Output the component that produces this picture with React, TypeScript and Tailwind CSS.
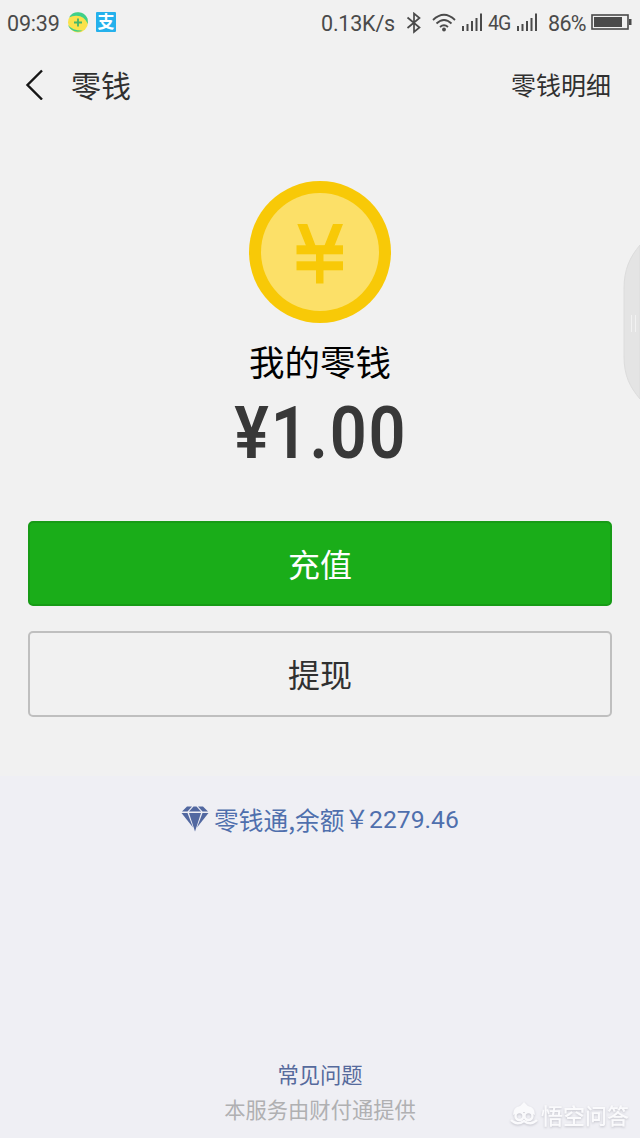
import React from 'react';

interface SignalBarsProps {
    className?: string;
}

const SignalBars = ({ className = '' }: SignalBarsProps) => (
    <svg className={className} width="21" height="19" viewBox="0 0 21 19" fill="#4a4a4a">
        <rect x="0" y="13" width="2" height="5" />
        <rect x="4.5" y="11" width="2" height="7" />
        <rect x="9" y="8" width="2" height="10" />
        <rect x="13.5" y="5" width="2" height="13" />
        <rect x="18" y="0.5" width="2" height="17.5" />
    </svg>
);

const StatusBar = () => (
    <div className="flex h-11 items-center pl-[7px] pr-2 pt-0.5 font-['Roboto',sans-serif] text-[21.5px] leading-none text-[#4a4a4a]">
        <span className="w-[53px] whitespace-nowrap pt-0.5 tracking-[-0.2px]">09:39</span>
        <svg className="ml-[7px] shrink-0" width="22" height="22" viewBox="0 0 22 22">
            <circle cx="11" cy="10.5" r="10" fill="#fbe24b" />
            <path d="M2 5.5A10.3 10.3 0 0 1 20.5 6.5L21 12Q17 3.5 9 3.8Q5 3.8 2 5.5Z" fill="#3fd08a" />
            <path d="M1 13Q5 18.5 15.5 18.5A10.3 10.3 0 0 1 1 13Z" fill="#3fd08a" />
            <path d="M11 6.5V14.5M7 10.5H15" stroke="#46b66a" strokeWidth="1.8" />
        </svg>
        <span className="ml-[7px] flex h-5 w-5 shrink-0 -translate-y-px items-center justify-center rounded-[1px] bg-[#25b1ec] font-['Noto_Sans_CJK_SC',sans-serif] text-[17px] font-bold leading-5 text-white">
            <span className="-mt-[3px]">支</span>
        </span>
        <span className="ml-auto w-[75px] whitespace-nowrap pt-0.5 tracking-[-0.2px]">0.13K/s</span>
        <svg className="ml-2.5 shrink-0" width="16" height="22" viewBox="0 0 16 22" fill="none" stroke="#4a4a4a" strokeWidth="1.7">
            <path d="M1.5 5.5L13.5 15.5L8 20V1.5L13.5 6L1.5 16" />
        </svg>
        <svg className="ml-2.5 shrink-0" width="24" height="20" viewBox="0 0 24 20" fill="none" stroke="#4a4a4a" strokeWidth="1.8">
            <path d="M1 7Q12 -3.5 23 7" />
            <path d="M4.5 10.5Q12 3.5 19.5 10.5" />
            <path d="M8 14Q12 10.5 16 14" />
            <circle cx="12" cy="16.5" r="1.9" fill="#4a4a4a" stroke="none" />
        </svg>
        <SignalBars className="ml-[6px] shrink-0 -translate-y-px" />
        <span className="ml-[5px] w-[24px] pt-0.5 text-[19.5px] tracking-[-1px]">4G</span>
        <SignalBars className="ml-[5px] shrink-0 -translate-y-px" />
        <span className="ml-2.5 w-[40px] whitespace-nowrap pt-0.5 tracking-[-0.7px]">86%</span>
        <svg className="ml-[3px] shrink-0 -translate-y-px" width="41" height="18" viewBox="0 0 41 18">
            <rect x="1" y="2" width="36" height="14" fill="none" stroke="#4a4a4a" strokeWidth="1.6" />
            <rect x="3" y="4" width="28" height="10" fill="#4a4a4a" />
            <rect x="38" y="6" width="2.5" height="6" fill="#4a4a4a" />
        </svg>
    </div>
);

const Header = () => (
    <div className="flex h-[80px] items-center justify-between pl-[25px] pr-[29px] text-[#303030]">
        <div className="flex items-center">
            <svg width="19" height="32" viewBox="0 0 19 32" fill="none" stroke="#161616" strokeWidth="2.4">
                <path d="M17 2.5L2.5 17L17 31.5" />
            </svg>
            <span className="ml-[27px] text-[30px] leading-10">零钱</span>
        </div>
        <span className="text-[25px] leading-10">零钱明细</span>
    </div>
);

const Coin = () => (
    <svg className="mx-auto" width="142" height="142" viewBox="0 0 142 142">
        <circle cx="71" cy="71" r="71" fill="#f8c907" />
        <circle cx="71" cy="71" r="59" fill="#fce068" />
        <g fill="#f8c907">
            <path d="M48.3 43H58.3L66.5 64.5H75.5L84 43H94L85 66H57.5Z" />
            <rect x="47.5" y="64.3" width="46.5" height="9" />
            <rect x="47.5" y="80.3" width="46.5" height="9" />
            <rect x="67" y="70" width="7.5" height="32.5" />
        </g>
    </svg>
);

const Diamond = () => (
    <svg className="mr-[5px]" width="28" height="26" viewBox="0 0 28 26" fill="#5268a0">
        <path d="M6 0.5H11L6.5 5.5H1Z" />
        <path d="M12.5 0.5H15.5L20 5.5H8Z" />
        <path d="M17 0.5H22L27 5.5H21.5Z" />
        <path d="M0.5 7H6.5L12 21.5Z" />
        <path d="M8 7H20L14 25.5Z" />
        <path d="M21.5 7H27.5L16 21.5Z" />
    </svg>
);

const Watermark = () => (
    <div className="absolute bottom-[10px] right-[11px] flex items-center text-[#fafafc] drop-shadow-[0_1px_1px_#c4c4cc]">
        <svg width="28" height="26" viewBox="0 0 28 26" fill="none" stroke="currentColor" strokeWidth="2.4">
            <path d="M3 14Q3 6 10 5L14 1L18 5Q25 6 25 14Q14 8 3 14Z" fill="currentColor" stroke="none" />
            <circle cx="9.5" cy="15" r="4" />
            <circle cx="18.5" cy="15" r="4" />
            <path d="M1 19Q7 25 14 20Q21 25 27 19" />
        </svg>
        <span className="ml-[3px] text-[22px] font-medium leading-7">悟空问答</span>
    </div>
);

const SideHandle = () => (
    <svg className="absolute right-0 top-[244px]" width="17" height="157" viewBox="0 0 17 157">
        <path d="M17 1C7 13 1 25 1 45V112C1 132 7 143 17 155Z" fill="#e4e4e4" stroke="#dcdcdc" />
        <path d="M8.5 71V88M12.5 71V88" stroke="#f2f2f2" />
    </svg>
);

export default function App() {
    return (
        <div className="relative flex h-[1138px] w-[640px] flex-col overflow-hidden bg-[#efeff4] font-['Noto_Sans_CJK_SC',sans-serif]">
            <div className="h-[776px] bg-[#f1f1f1]">
                <StatusBar />
                <Header />
                <div className="pt-[57px] text-center">
                    <Coin />
                    <div className="mt-4 text-[35.5px] leading-[44px] text-black">我的零钱</div>
                    <div className="mt-1.5 h-[82px] scale-x-90 pl-0.5 font-['Roboto',sans-serif] text-[72px] font-semibold leading-[90px] tracking-[2px] text-[#383838]">
                        ¥1.00
                    </div>
                </div>
                <div className="mt-[50px] flex flex-col gap-[25px] px-7 text-[32px]">
                    <button className="h-[85px] rounded-[5px] border-2 border-[#179b16] bg-[#1aad19] pb-0.5 text-white">充值</button>
                    <button className="h-[86px] rounded-[5px] border-2 border-[#bfbfbf] pb-0.5 text-[#303030]">提现</button>
                </div>
            </div>
            <div className="mt-[25px] flex h-9 items-center justify-center text-[24.7px] leading-9 text-[#4f6fad]">
                <Diamond />
                <span>零钱通,余额</span>
                <span className="pt-0.5 font-['Roboto','Noto_Sans_CJK_SC',sans-serif]">￥2279.46</span>
            </div>
            <div className="mt-auto mb-3 text-center text-[21.3px] leading-[35px]">
                <div className="text-[#566a9c]">常见问题</div>
                <div className="text-[#b0b0b2]">本服务由财付通提供</div>
            </div>
            <SideHandle />
            <Watermark />
        </div>
    );
}
